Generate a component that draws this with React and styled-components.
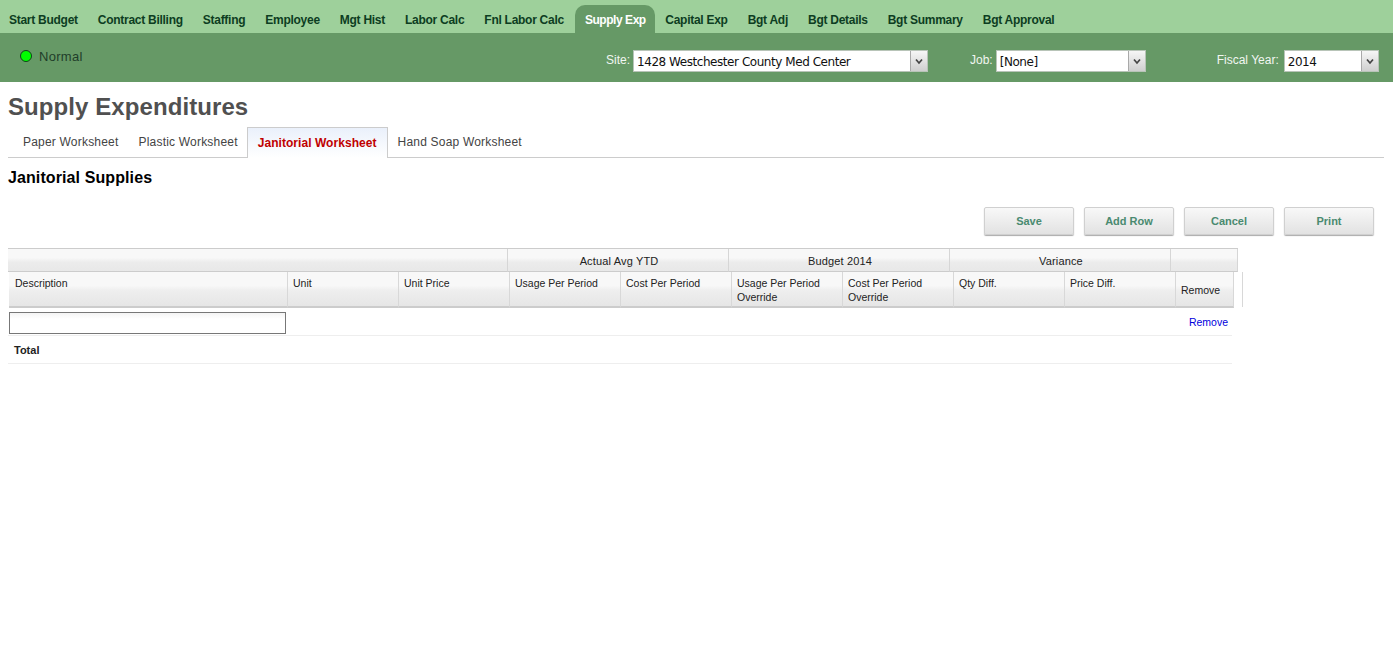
import React from "react";
import styled, { createGlobalStyle } from "styled-components";

const Global = createGlobalStyle`
  html, body { margin: 0; padding: 0; background: #fff; }
  body { font-family: "Liberation Sans", Arial, sans-serif; color: #000; }
`;

const TopNav = styled.nav`
  height: 33px; background: #9ed09b; display: flex; align-items: flex-end;
`;
const NavItem = styled.a`
  height: 28px; line-height: 31px; padding: 0 10px;
  font-size: 12px; font-weight: bold; white-space: nowrap; letter-spacing: -0.27px;
  color: #0d3d22;
  ${p => p.$active ? `
    color: #fff; background: #669966; border-radius: 10px 10px 0 0; letter-spacing: -0.45px;
    padding: 0 9px 0 10px; margin: 0 0.5px 0 1px;
  ` : ""}
  &:first-child { padding-left: 9px; }
`;
const ContextBar = styled.div`
  height: 49px; background: #669966; display: flex;
`;
const Status = styled.div`
  display: flex; align-items: center; gap: 7px; height: 12px; margin: 17px 0 0 20px;
  width: 566px; font-size: 13px; color: #1f3d2a; letter-spacing: 0.3px;
`;
const Lamp = styled.span`
  width: 10px; height: 10px; border-radius: 50%; background: #00ff00; border: 1px solid #12401c;
`;
const Field = styled.label`
  display: flex; align-items: flex-start; margin-top: 17px; font-size: 12px; color: #f1f6f1;
  margin-left: ${p => p.$ml}px;
`;
const FieldLabel = styled.span`
  line-height: 20px; margin-right: ${p => p.$gap || 3}px; white-space: nowrap;
`;
const SelectBox = styled.div`
  width: ${p => p.$w}px; height: 22px; box-sizing: border-box; background: #fff; display: flex;
  border: 1px solid #b8c4b8;
`;
const SelectValue = styled.span`
  flex: 1; font: 12px/22px "DejaVu Sans", Verdana, sans-serif; padding-left: 3px; color: #111;
  white-space: nowrap; overflow: hidden; letter-spacing: -0.45px;
`;
const SelectArrow = styled.span`
  width: 16px; background: linear-gradient(#f6f6f6, #cfcfcf); border-left: 1px solid #a9a9a9;
  display: flex; align-items: center; justify-content: center;
`;
const Chevron = () => (
  <svg width="8" height="7" viewBox="0 0 8 7"><path d="M1 1.5l3 3.5 3-3.5" fill="none" stroke="#444" strokeWidth="1.7" /></svg>
);
const Main = styled.main`
  padding: 0 8px;
`;
const Title = styled.h1`
  margin: 0; padding-top: 12px; height: 33px; line-height: 26px; font-size: 24px; font-weight: bold; color: #505050;
  letter-spacing: 0.08px;
`;
const Tabs = styled.div`
  display: flex; height: 30px; border-bottom: 1px solid #ccc; width: 1376px;
`;
const Tab = styled.a`
  font-size: 12px; white-space: nowrap; height: 30px; box-sizing: border-box; line-height: 31px;
  padding: 0 10px; letter-spacing: 0.2px;
  color: ${p => (p.$active ? "#c00000" : "#444")};
  ${p => p.$active ? `
    background: linear-gradient(#eaf0fb, #fff); border: 1px solid #ccc; border-bottom: 0; height: 31px;
    line-height: 31px; font-weight: bold; margin: 0 0 -1px -1px; letter-spacing: 0.05px;
  ` : ""}
  &:first-child { padding-left: 15px; }
`;
const Section = styled.h2`
  margin: 11px 0 0; font-size: 16px; line-height: 18px; font-weight: bold; color: #000; letter-spacing: 0.1px;
`;
const Buttons = styled.div`
  display: flex; justify-content: flex-end; gap: 10px; width: 1366px; margin-top: 20px;
`;
const Btn = styled.button`
  width: 90px; height: 28px; padding: 0; font: bold 11px "Liberation Sans", Arial, sans-serif; color: #4a8a70;
  background: linear-gradient(#f8f8f8, #e2e2e2); border: 1px solid #d0d0d0; border-radius: 2px;
  box-shadow: 0 1px 1px #aaa;
`;
const Grid = styled.div`
  margin-top: 13px; width: 1236px; font-size: 10.5px; color: #222;
`;
const GroupRow = styled.div`
  display: flex; width: 1230px; height: 24px; border-top: 1px solid #ccc; box-sizing: border-box;
`;
const GroupCell = styled.div`
  width: ${p => p.$w}px; box-sizing: border-box; text-align: center; line-height: 25px; font-size: 11px;
  padding-left: 2px; letter-spacing: 0.15px;
  background: linear-gradient(#f8f8f8 0 40%, #ececec 60%, #e8e8e8);
  border-right: 1px solid #d6d6d6; border-bottom: 1px solid #ccc;
`;
const HeadRow = styled.div`
  display: flex; width: 1234px; margin-left: 1px;
`;
const HeadCell = styled.div`
  width: ${p => p.$w}px; height: 36px; box-sizing: border-box;
  padding: ${p => (p.$mid ? "11px 0 0 5px" : "4px 5px 0 5px")};
  font-size: 10.5px; line-height: 14px; border-right: 1px solid #d8d8d8; border-bottom: 2px solid #ccc;
  background: linear-gradient(#f8f8f8 0 40%, #eeeeee 55%, #e6e6e6);
  &:first-child { padding-left: 6px; }
`;
const HeadEnd = styled.div`
  width: 9px; height: 35px; box-sizing: border-box; border-right: 1px solid #d8d8d8;
`;
const BodyRow = styled.div`
  display: flex; align-items: center; justify-content: space-between; width: 1220px; height: ${p => p.$h}px;
  border-bottom: 1px solid #eee; padding-right: 4px;
`;
const NameInput = styled.input`
  width: 277px; height: 22px; box-sizing: border-box; margin: 3px 0 0 1px; padding: 0 3px;
  border: 1px solid #777; background: linear-gradient(#f4f4f4, #fff 30%);
`;
const RemoveLink = styled.a`
  font-size: 10.5px; color: #0000dd;
`;
const TotalLabel = styled.b`
  font-size: 11px; color: #222; margin-left: 6px;
`;

const nav = ["Start Budget", "Contract Billing", "Staffing", "Employee", "Mgt Hist", "Labor Calc", "Fnl Labor Calc", "Supply Exp", "Capital Exp", "Bgt Adj", "Bgt Details", "Bgt Summary", "Bgt Approval"];
const tabs = ["Paper Worksheet", "Plastic Worksheet", "Janitorial Worksheet", "Hand Soap Worksheet"];
const groups = [["", 500], ["Actual Avg YTD", 221], ["Budget 2014", 221], ["Variance", 221], ["", 67]];
const cols = [["Description", 279], ["Unit", 111], ["Unit Price", 111], ["Usage Per Period", 111], ["Cost Per Period", 111], ["Usage Per Period Override", 111], ["Cost Per Period Override", 111], ["Qty Diff.", 111], ["Price Diff.", 111], ["Remove", 58, true]];

export default function App() {
  return (
    <>
      <Global />
      <TopNav>
        {nav.map(n => <NavItem key={n} $active={n === "Supply Exp"}>{n}</NavItem>)}
      </TopNav>
      <ContextBar>
        <Status><Lamp />Normal</Status>
        <Field $ml={20}><FieldLabel>Site:</FieldLabel>
          <SelectBox $w={295}><SelectValue>1428 Westchester County Med Center</SelectValue><SelectArrow><Chevron /></SelectArrow></SelectBox>
        </Field>
        <Field $ml={42}><FieldLabel>Job:</FieldLabel>
          <SelectBox $w={150}><SelectValue>[None]</SelectValue><SelectArrow><Chevron /></SelectArrow></SelectBox>
        </Field>
        <Field $ml={71}><FieldLabel $gap={5}>Fiscal Year:</FieldLabel>
          <SelectBox $w={95}><SelectValue>2014</SelectValue><SelectArrow><Chevron /></SelectArrow></SelectBox>
        </Field>
      </ContextBar>
      <Main>
        <Title>Supply Expenditures</Title>
        <Tabs>
          {tabs.map(t => <Tab key={t} $active={t.startsWith("Janitorial")}>{t}</Tab>)}
        </Tabs>
        <Section>Janitorial Supplies</Section>
        <Buttons>
          {["Save", "Add Row", "Cancel", "Print"].map(b => <Btn key={b}>{b}</Btn>)}
        </Buttons>
        <Grid>
          <GroupRow>
            {groups.map(([g, w], i) => <GroupCell key={i} $w={w}>{g}</GroupCell>)}
          </GroupRow>
          <HeadRow>
            {cols.map(([c, w, mid]) => <HeadCell key={c} $w={w} $mid={mid}>{c}</HeadCell>)}
            <HeadEnd />
          </HeadRow>
          <BodyRow $h={27}><NameInput /><RemoveLink>Remove</RemoveLink></BodyRow>
          <BodyRow $h={27}><TotalLabel>Total</TotalLabel></BodyRow>
        </Grid>
      </Main>
    </>
  );
}
